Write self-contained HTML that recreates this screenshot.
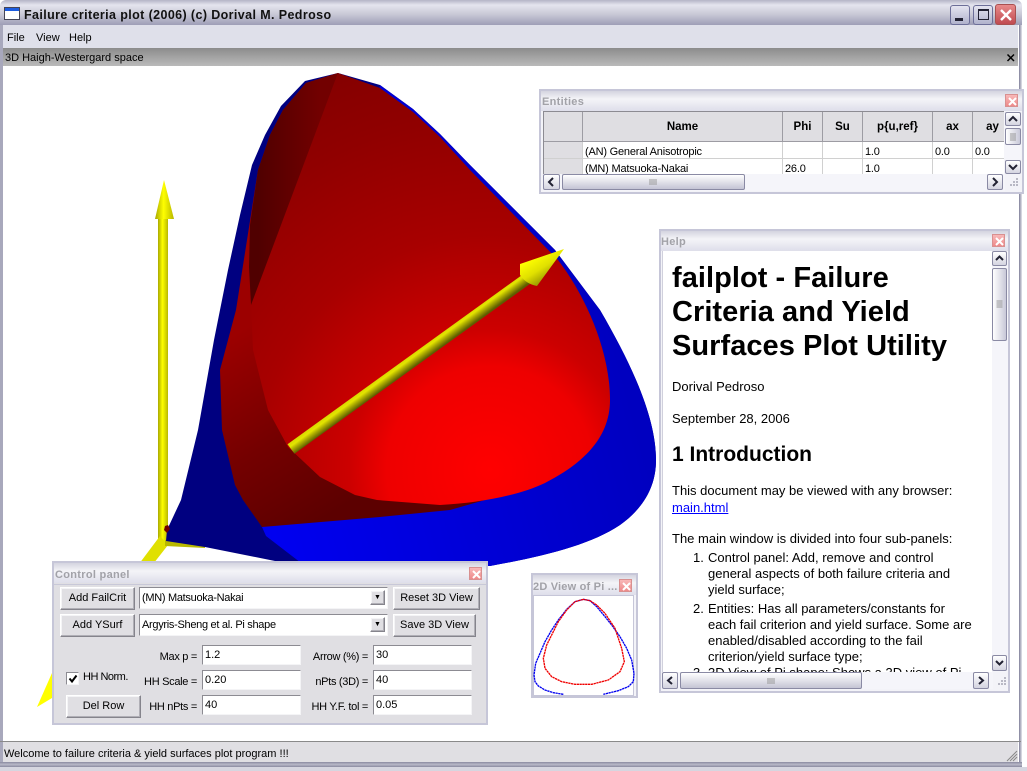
<!DOCTYPE html>
<html><head><meta charset="utf-8"><style>
html,body{margin:0;padding:0;background:#fff}
#r{position:relative;width:1027px;height:771px;overflow:hidden;background:#fff;font:11px "Liberation Sans",sans-serif;color:#000}
#r div,#r span.t{position:absolute;box-sizing:border-box}
.t{white-space:nowrap;position:absolute}
.win{background:#e0dfe3;border:2px solid #c6c6d8}
.tb{left:0;right:0;top:0;height:20px;background:linear-gradient(#d4d4e0,#f4f4f8 40%,#dedeea)}
.tt{color:#a2a2a8;font-weight:bold;font-size:11px;left:2px;top:5px;letter-spacing:.3px}
.cl{width:13px;height:13px;background:linear-gradient(#f8b8b8,#ee8a8a);border:1px solid #d89090}
.cl svg{position:absolute;left:1px;top:1px}
.btn{background:#e0dfe3;border:1px solid;border-color:#fff #85848c #85848c #fff;box-shadow:inset -1px -1px 0 #b0afb6,inset 1px 1px 0 #f4f4f6;text-align:center;font-size:11px;line-height:21px}
.inp{background:#fff;border:1px solid;border-color:#8c8b92 #f4f4f6 #f4f4f6 #8c8b92;font-size:11px;line-height:18px;padding-left:2px}
.cmb{line-height:21px;letter-spacing:-.3px}
.lab{font-size:11px;text-align:right;line-height:16px;letter-spacing:-.3px;white-space:nowrap}
.sb{background:linear-gradient(#fff,#d4d4e0);border:1px solid #8a8aa4;border-radius:2px}
.sb svg{position:absolute;left:0;top:0}
.v{background:linear-gradient(90deg,#fff,#c8c8d8)}
.hh{background:linear-gradient(#fff,#c4c4d4)}
.th{background:#dfdee2;border-right:1px solid #9d9ca3;border-bottom:1px solid #9d9ca3;text-align:center;font-weight:bold;font-size:11.5px;line-height:30px;top:0;height:30px}
.td{top:0;height:17px;border-right:1px solid #d0d0d0;border-bottom:1px solid #d0d0d0;font-size:11px;line-height:20px;padding-left:2px;background:#fff;white-space:nowrap;letter-spacing:-.2px;overflow:hidden}
.h{font-size:13px;line-height:16px;white-space:nowrap;position:absolute}
</style></head><body><div id="r">

<!-- main window chrome -->
<div style="left:0;top:0;width:1022px;height:25px;background:linear-gradient(#b4b4c6,#e4e4ee 20%,#c6c6d4 60%,#9e9eb6);border-radius:6px 6px 0 0"></div>
<svg style="position:absolute;left:4px;top:7px" width="16" height="14"><rect x=".5" y=".5" width="15" height="12" fill="#fff" stroke="#445"/><rect x="1" y="1" width="14" height="3" fill="#1c5ce0"/></svg>
<span class="t" style="left:24px;top:8px;font-weight:bold;font-size:12.5px;letter-spacing:.39px;color:#111">Failure criteria plot (2006) (c) Dorival M. Pedroso</span>
<div style="left:950px;top:5px;width:20px;height:20px;border:1px solid #6c6e98;border-radius:3px;background:linear-gradient(#e4e4f0,#b0b2cc)"><div style="left:4px;top:12px;width:8px;height:3px;background:#223"></div></div>
<div style="left:973px;top:5px;width:20px;height:20px;border:1px solid #6c6e98;border-radius:3px;background:linear-gradient(#e4e4f0,#b0b2cc)"><div style="left:4px;top:3px;width:11px;height:11px;border:1px solid #223;border-top-width:2px"></div></div>
<div style="left:995px;top:4px;width:21px;height:21px;border:1px solid #a85050;border-radius:3px;background:linear-gradient(#e88a8a,#c04a50)"><svg style="position:absolute;left:3px;top:3px" width="14" height="14"><path d="M2 2L12 12M12 2L2 12" stroke="#fff" stroke-width="2.4"/></svg></div>
<div style="left:0;top:25px;width:3px;height:737px;background:#a8a8bc"></div>
<div style="left:1018px;top:25px;width:4px;height:737px;background:linear-gradient(90deg,#fff 0,#fff 25%,#8f8fa6 25%,#8f8fa6 60%,#d4d4de 60%)"></div>
<div style="left:3px;top:25px;width:1015px;height:23px;background:#dfe0ea"></div>
<span class="t" style="left:7px;top:32px">File</span>
<span class="t" style="left:36px;top:32px">View</span>
<span class="t" style="left:69px;top:32px">Help</span>
<div style="left:3px;top:48px;width:1015px;height:18px;background:linear-gradient(#8c8c8c,#bababa)"></div>
<span class="t" style="left:5px;top:52px">3D Haigh-Westergard space</span>
<svg style="position:absolute;left:1006px;top:53px" width="10" height="10"><path d="M1.5 1.5L8 8M8 1.5L1.5 8" stroke="#000" stroke-width="1.5"/></svg>

<!-- 3D view -->
<svg style="position:absolute;left:0;top:0" width="1027" height="771">
<defs>
<linearGradient id="ys" x1="0" x2="1" y1="0" y2="0"><stop offset="0" stop-color="#a8a800"/><stop offset=".45" stop-color="#ffff00"/><stop offset="1" stop-color="#b8b800"/></linearGradient>
<linearGradient id="ya" gradientUnits="userSpaceOnUse" x1="287.5" y1="444.2" x2="294.5" y2="453.8"><stop offset="0" stop-color="#d8d800"/><stop offset=".3" stop-color="#e4e400"/><stop offset=".6" stop-color="#a8a800"/><stop offset="1" stop-color="#5e5e00"/></linearGradient>
<linearGradient id="yh" gradientUnits="userSpaceOnUse" x1="525" y1="262" x2="540" y2="286"><stop offset="0" stop-color="#ffff00"/><stop offset=".5" stop-color="#e0e000"/><stop offset="1" stop-color="#909000"/></linearGradient>
<radialGradient id="rd" gradientUnits="userSpaceOnUse" cx="490" cy="470" r="470"><stop offset="0" stop-color="#ff0000"/><stop offset=".22" stop-color="#ee0000"/><stop offset=".3" stop-color="#cc0000"/><stop offset=".5" stop-color="#a80000"/><stop offset=".75" stop-color="#900000"/><stop offset="1" stop-color="#7e0000"/></radialGradient>
<linearGradient id="bnd" gradientUnits="userSpaceOnUse" x1="225" y1="340" x2="330" y2="515"><stop offset="0" stop-color="#9c0000"/><stop offset=".55" stop-color="#740000"/><stop offset="1" stop-color="#5c0000"/></linearGradient>
<linearGradient id="wd" gradientUnits="userSpaceOnUse" x1="258" y1="200" x2="320" y2="200"><stop offset="0" stop-color="#500000"/><stop offset="1" stop-color="#720000"/></linearGradient>
<linearGradient id="bl" gradientUnits="userSpaceOnUse" x1="270" y1="530" x2="640" y2="430"><stop offset="0" stop-color="#0000f0"/><stop offset="1" stop-color="#0000c0"/></linearGradient>
</defs>
<!-- vertical axis -->
<rect x="158" y="215" width="10" height="330" fill="url(#ys)"/>
<path d="M164 180L174 219L155 219Z" fill="url(#ys)"/>
<!-- lower axes -->
<path d="M160 536L168 545L150 568L136 568Z" fill="#e0e000"/>
<path d="M165 540L205 545L205 548L165 546Z" fill="#b8b800"/>
<path d="M52 673L52 698L37 707Z" fill="#ffff00"/>
<!-- blue surface -->
<path d="M338 73L305 81L281 106L265 135L252 165L240 215L228 270L214 340L198 430L181 500L167 530L166 541L205 547L270 560L300 566L490 566C545 556 590 545 620 525C645 507 656 485 656 460C656 420 635 370 600 310L555 250L470 165L440 134L413 109L380 85Z" fill="#000080"/>
<path d="M262 527L266 536L305 566L490 566C545 556 590 545 620 525C645 507 656 485 656 460C656 420 635 370 600 310L555 250L470 165L440 134L413 109L380 85L340 300Z" fill="url(#bl)"/>
<path d="M165 526l3 -1l2 4l-3 4l-3 -3z" fill="#700000"/>
<!-- red outer band -->
<path d="M338 73L306 83L283 110L270 135L258 170L247 240L236 310L220 370L222 430L235 485L243 500L262 527L380 517L450 510L520 490L400 300Z" fill="url(#bnd)"/>
<!-- red inner -->
<path d="M338 73L380 88L413 112L440 137L470 170L558 260C585 295 610 350 610 400C610 440 580 465 545 483C520 495 480 503 440 505L377 500L355 495L320 477L288 447L268 410L253 350L251 305Z" fill="url(#rd)"/>
<!-- dark wedge -->
<path d="M338 73L306 83L283 110L270 135L258 170L250 225L249 267L251 305Z" fill="url(#wd)"/>
<!-- arrow -->
<path d="M287.5 444.2L524.5 273.2L531.5 282.8L294.5 453.8Z" fill="url(#ya)"/>
<path d="M564 249L520 264L520 275Q526 284 537 286Z" fill="url(#yh)"/>
</svg>

<!-- Entities -->
<div class="win" style="left:539px;top:89px;width:485px;height:105px;background:#f3f3f8">
 <div class="tb"></div><span class="t tt" style="left:1px;top:5px">Entities</span>
 <div class="cl" style="left:464px;top:3px"><svg width="11" height="11"><path d="M2 2L9 9M9 2L2 9" stroke="#fff" stroke-width="2"/></svg></div>
 <div style="left:2px;top:20px;width:462px;height:63px;overflow:hidden;background:#fff;border-left:1px solid #8c8b92;border-top:1px solid #8c8b92">
  <div class="th" style="left:0;width:39px"></div>
  <div class="th" style="left:39px;width:200px">Name</div>
  <div class="th" style="left:239px;width:40px">Phi</div>
  <div class="th" style="left:279px;width:40px">Su</div>
  <div class="th" style="left:319px;width:70px">p{u,ref}</div>
  <div class="th" style="left:389px;width:40px">ax</div>
  <div class="th" style="left:429px;width:40px">ay</div>
  <div style="left:0;top:30px;width:470px;height:17px">
   <div class="td" style="left:0;width:39px;background:#dfdee2"></div>
   <div class="td" style="left:39px;width:200px">(AN) General Anisotropic</div>
   <div class="td" style="left:239px;width:40px"></div>
   <div class="td" style="left:279px;width:40px"></div>
   <div class="td" style="left:319px;width:70px">1.0</div>
   <div class="td" style="left:389px;width:40px">0.0</div>
   <div class="td" style="left:429px;width:40px">0.0</div>
  </div>
  <div style="left:0;top:47px;width:470px;height:17px">
   <div class="td" style="left:0;width:39px;background:#dfdee2"></div>
   <div class="td" style="left:39px;width:200px">(MN) Matsuoka-Nakai</div>
   <div class="td" style="left:239px;width:40px">26.0</div>
   <div class="td" style="left:279px;width:40px"></div>
   <div class="td" style="left:319px;width:70px">1.0</div>
   <div class="td" style="left:389px;width:40px"></div>
   <div class="td" style="left:429px;width:40px"></div>
  </div>
 </div>
 <div style="left:463px;top:20px;width:17px;height:63px;background:#f5f5fa"></div>
 <div class="sb" style="left:464px;top:21px;width:16px;height:14px"><svg width="14" height="12"><path d="M3 8L7 4L11 8" fill="none" stroke="#223" stroke-width="2"/></svg></div>
 <div class="sb v" style="left:464px;top:37px;width:16px;height:17px"><svg width="14" height="15"><path d="M4 5H10M4 7H10M4 9H10M4 11H10" stroke="#999" stroke-width="1"/></svg></div>
 <div class="sb" style="left:464px;top:69px;width:16px;height:14px"><svg width="14" height="12"><path d="M3 4L7 8L11 4" fill="none" stroke="#223" stroke-width="2"/></svg></div>
 <div style="left:2px;top:83px;width:462px;height:17px;background:#f5f5fa"></div>
 <div class="sb" style="left:2px;top:83px;width:17px;height:16px"><svg width="15" height="14"><path d="M9 3L5 7L9 11" fill="none" stroke="#223" stroke-width="2"/></svg></div>
 <div class="sb hh" style="left:21px;top:83px;width:183px;height:16px"><svg width="181" height="14"><path d="M87 4V10M89 4V10M91 4V10M93 4V10" stroke="#999" stroke-width="1"/></svg></div>
 <div class="sb" style="left:446px;top:83px;width:16px;height:16px"><svg width="14" height="14"><path d="M5 3L9 7L5 11" fill="none" stroke="#223" stroke-width="2"/></svg></div>
 <svg style="position:absolute;left:466px;top:87px" width="12" height="12"><path d="M9 1h2M6 4h2M9 4h2M3 7h2M6 7h2M9 7h2" stroke="#b8b8c4" stroke-width="2"/></svg>
</div>

<!-- Help -->
<div class="win" style="left:659px;top:229px;width:351px;height:464px;background:#f3f3f8">
 <div class="tb"></div><span class="t tt" style="left:0;top:5px">Help</span>
 <div class="cl" style="left:331px;top:3px"><svg width="11" height="11"><path d="M2 2L9 9M9 2L2 9" stroke="#fff" stroke-width="2"/></svg></div>
 <div style="left:1px;top:20px;width:331px;height:421px;overflow:hidden;background:#fff;border-left:1px solid #d0d0dc">
  <span class="t" style="left:9px;top:10px;font-size:29px;font-weight:bold;line-height:34px;letter-spacing:.05px">failplot - Failure<br>Criteria and Yield<br>Surfaces Plot Utility</span>
  <span class="h" style="left:9px;top:128px">Dorival Pedroso</span>
  <span class="h" style="left:9px;top:160px">September 28, 2006</span>
  <span class="t" style="left:9px;top:191px;font-size:21px;font-weight:bold;line-height:26px">1 Introduction</span>
  <span class="h" style="left:9px;top:232px">This document may be viewed with any browser:</span>
  <span class="h" style="left:9px;top:249px;color:#0000ff;text-decoration:underline">main.html</span>
  <span class="h" style="left:9px;top:280px">The main window is divided into four sub-panels:</span>
  <span class="h" style="left:30px;top:299px">1.</span>
  <span class="h" style="left:45px;top:299px">Control panel: Add, remove and control<br>general aspects of both failure criteria and<br>yield surface;</span>
  <span class="h" style="left:30px;top:350px">2.</span>
  <span class="h" style="left:45px;top:350px">Entities: Has all parameters/constants for<br>each fail criterion and yield surface. Some are<br>enabled/disabled according to the fail<br>criterion/yield surface type;</span>
  <span class="h" style="left:30px;top:414px">3.</span>
  <span class="h" style="left:45px;top:414px">3D View of Pi shape: Shows a 3D view of Pi</span>
 </div>
 <div style="left:331px;top:20px;width:16px;height:421px;background:#f5f5fa"></div>
 <div class="sb" style="left:331px;top:20px;width:15px;height:15px"><svg width="13" height="13"><path d="M3 8L6.5 4.5L10 8" fill="none" stroke="#223" stroke-width="2"/></svg></div>
 <div class="sb v" style="left:331px;top:37px;width:15px;height:73px"><svg width="13" height="71"><path d="M3.5 32H9.5M3.5 34H9.5M3.5 36H9.5M3.5 38H9.5" stroke="#999" stroke-width="1"/></svg></div>
 <div class="sb" style="left:331px;top:424px;width:15px;height:16px"><svg width="13" height="14"><path d="M3 5L6.5 8.5L10 5" fill="none" stroke="#223" stroke-width="2"/></svg></div>
 <div style="left:1px;top:441px;width:331px;height:17px;background:#f5f5fa"></div>
 <div class="sb" style="left:1px;top:441px;width:16px;height:17px"><svg width="14" height="15"><path d="M9 4L5 7.5L9 11" fill="none" stroke="#223" stroke-width="2"/></svg></div>
 <div class="sb hh" style="left:19px;top:441px;width:182px;height:17px"><svg width="180" height="15"><path d="M87 5V11M89 5V11M91 5V11M93 5V11" stroke="#999" stroke-width="1"/></svg></div>
 <div class="sb" style="left:312px;top:441px;width:16px;height:17px"><svg width="14" height="15"><path d="M5 4L9 7.5L5 11" fill="none" stroke="#223" stroke-width="2"/></svg></div>
 <svg style="position:absolute;left:334px;top:446px" width="12" height="12"><path d="M9 1h2M6 4h2M9 4h2M3 7h2M6 7h2M9 7h2" stroke="#b8b8c4" stroke-width="2"/></svg>
</div>

<!-- 2D view -->
<div class="win" style="left:531px;top:573px;width:107px;height:125px;background:#f3f3f8">
 <div class="tb"></div>
 <span class="t tt" style="left:0;top:6px;letter-spacing:.2px">2D View of Pi ...</span>
 <div class="cl" style="left:86px;top:4px"><svg width="11" height="11"><path d="M2 2L9 9M9 2L2 9" stroke="#fff" stroke-width="2"/></svg></div>
 <div style="left:0;top:20px;width:101px;height:101px;background:#fff;border:1px solid #c6c6d8"></div>
 <svg style="position:absolute;left:-2px;top:-2px" width="107" height="125">
  <g transform="translate(-6,-3) scale(.33333)" fill="none" stroke-width="4" stroke-dasharray="7 1.5" stroke-linejoin="round">
  <polyline stroke="#0000f0" points="115,373 85,368 60,360 40,348 30,335 27,315 32,280 45,250 60,215 80,180 100,150 125,118 150,95 175,88 195,92 215,110 240,140 260,165 285,200 305,235 320,270 327,310 325,335 310,350 280,362 235,373"/>
  <polyline stroke="#f00000" points="175,88 150,95 125,120 100,155 80,195 65,225 55,265 60,295 80,320 110,335 150,343 200,343 250,330 285,305 298,275 290,235 270,175 240,130 215,105 195,92 175,88"/>
  </g>
 </svg>
</div>

<!-- Control panel -->
<div class="win" style="left:52px;top:561px;width:436px;height:164px">
 <div class="tb"></div><span class="t tt" style="left:1px;top:6px">Control panel</span>
 <div class="cl" style="left:415px;top:4px"><svg width="11" height="11"><path d="M2 2L9 9M9 2L2 9" stroke="#fff" stroke-width="2"/></svg></div>
 <div style="left:0;top:21px;width:432px;height:1px;background:#c8c8d8"></div>
 <div class="btn" style="left:6px;top:24px;width:75px;height:23px">Add FailCrit</div>
 <div class="inp cmb" style="left:85px;top:24px;width:249px;height:22px">(MN) Matsuoka-Nakai</div>
 <div class="btn" style="left:316px;top:27px;width:15px;height:15px;line-height:13px;font-size:7px">▼</div>
 <div class="btn" style="left:339px;top:24px;width:87px;height:23px">Reset 3D View</div>
 <div class="btn" style="left:6px;top:51px;width:75px;height:23px">Add YSurf</div>
 <div class="inp cmb" style="left:85px;top:51px;width:249px;height:22px">Argyris-Sheng et al. Pi shape</div>
 <div class="btn" style="left:316px;top:54px;width:15px;height:15px;line-height:13px;font-size:7px">▼</div>
 <div class="btn" style="left:339px;top:51px;width:83px;height:23px">Save 3D View</div>

 <div class="lab" style="left:53px;top:86px;width:90px">Max p =</div>
 <div class="inp" style="left:148px;top:82px;width:99px;height:20px">1.2</div>
 <div class="lab" style="left:214px;top:86px;width:100px">Arrow (%) =</div>
 <div class="inp" style="left:319px;top:82px;width:99px;height:20px">30</div>
 <div class="lab" style="left:53px;top:111px;width:90px">HH Scale =</div>
 <div class="inp" style="left:148px;top:107px;width:99px;height:20px">0.20</div>
 <div class="lab" style="left:214px;top:111px;width:100px">nPts (3D) =</div>
 <div class="inp" style="left:319px;top:107px;width:99px;height:20px">40</div>
 <div class="lab" style="left:53px;top:136px;width:90px">HH nPts =</div>
 <div class="inp" style="left:148px;top:132px;width:99px;height:20px">40</div>
 <div class="lab" style="left:214px;top:136px;width:100px">HH Y.F. tol =</div>
 <div class="inp" style="left:319px;top:132px;width:99px;height:20px">0.05</div>

 <div class="inp" style="left:12px;top:109px;width:13px;height:13px;padding:0"><svg style="position:absolute;left:1px;top:1px" width="10" height="10"><path d="M1.5 4.5L4 7.5L8.5 1.5" fill="none" stroke="#000" stroke-width="2"/></svg></div>
 <span class="t" style="left:29px;top:108px;font-size:11px;letter-spacing:-.5px">HH Norm.</span>
 <div class="btn" style="left:12px;top:132px;width:75px;height:23px">Del Row</div>
</div>

<!-- status -->
<div style="left:0;top:741px;width:1021px;height:1px;background:#8a8a8a"></div>
<div style="left:3px;top:742px;width:1015px;height:20px;background:#e0dfe3"></div>
<span class="t" style="left:4px;top:748px">Welcome to failure criteria &amp; yield surfaces plot program !!!</span>
<svg style="position:absolute;left:1006px;top:750px" width="12" height="12"><path d="M11 1L1 11M11 4L4 11M11 7L7 11" stroke="#888" stroke-width="1"/></svg>
<div style="left:0;top:762px;width:1022px;height:5px;background:linear-gradient(#8a8aa0,#b8b8c8,#8a8aa0)"></div>
<div style="left:0;top:767px;width:1027px;height:4px;background:#d6d6e0"></div>
</div></body></html>
